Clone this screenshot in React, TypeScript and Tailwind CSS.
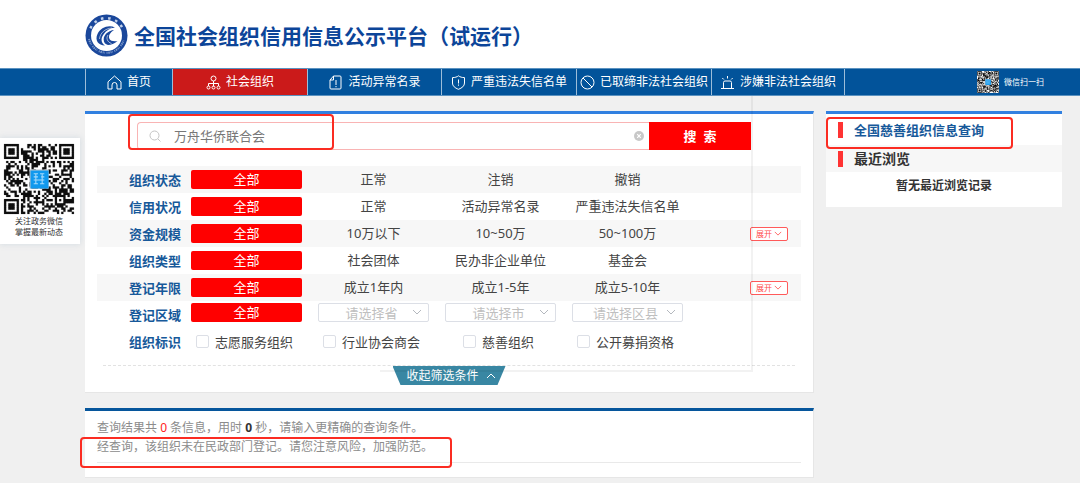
import { useState } from 'react';
import type { ReactNode } from 'react';

const QR_SIZE = 33;

const inFinder = (x: number, y: number) =>
  (x < 8 && y < 8) || (x > QR_SIZE - 9 && y < 8) || (x < 8 && y > QR_SIZE - 9);

const ring = (x: number, y: number, cx: number, cy: number) =>
  Math.max(Math.abs(x - cx), Math.abs(y - cy));

const isDark = (x: number, y: number) => {
  if (inFinder(x, y)) {
    const cx = x < 8 ? 3 : QR_SIZE - 4;
    const cy = y < 8 ? 3 : QR_SIZE - 4;
    const d = ring(x, y, cx, cy);
    return d <= 1 || d === 3;
  }
  const a = ring(x, y, 26, 26);
  if (a <= 2) return a !== 1;
  let h = (x * 374761393 + y * 668265263) | 0;
  h = Math.imul(h ^ (h >>> 13), 1274126177);
  return ((h ^ (h >>> 16)) & 1) === 1;
};

let qrPath = '';
for (let y = 0; y < QR_SIZE; y++) {
  for (let x = 0; x < QR_SIZE; x++) {
    if (isDark(x, y)) qrPath += `M${x} ${y}h1v1h-1z`;
  }
}

const QrCode = ({ className }: { className: string }) => (
  <svg className={className} viewBox="-0.5 -0.5 34 34" role="img" aria-label="微信二维码">
    <rect x="-0.5" y="-0.5" width="34" height="34" fill="#fff" />
    <path d={qrPath} fill="#111" stroke="#111" strokeWidth=".08" />
    <rect x="12" y="12" width="9" height="9" fill="#b9c4cc" />
    <rect x="12.5" y="12.5" width="8.5" height="8.5" fill="#1199ee" />
    <path d="M14 14h2M17 14h2M14 15.5h2M17.5 15.5h1.5M14 17h5M14 18.7h2M17 18.7h2M15 14v5M18 14v5" stroke="#a5dafb" strokeWidth=".5" />
  </svg>
);

const Logo = () => (
  <svg className="w-[43px] h-[43px] shrink-0" viewBox="0 0 86 86" fill="none" aria-hidden="true">
    <circle cx="43" cy="43" r="42" fill="#1a479b" />
    <circle cx="43" cy="43" r="31" fill="#fff" />
    <path d="M10.8 28.700 A35.500 35.500 0 0 1 75.200 28.700" stroke="#c3d2ea" strokeWidth="5" strokeDasharray="5 9.500" />
    <path d="M8 50 A36 36 0 0 0 78 50" stroke="#7d9acb" strokeWidth="4" strokeDasharray="2 1.500 3 1.500 2 1.500 1 3.500" />
    <path d="M60 27 C47 21 31 27 25 40 C19 53 27 63 40 63 C32 58 31 49 37 41 C42 33 50 28 60 27z" fill="#1a479b" />
    <path d="M58 32 C47 33 38 41 37 50 C37 57 41 61 46 62 C52 62 59 59 65 54 C57 55 51 54 49 50 C46 44 50 37 58 32z" fill="#1a479b" />
    <path d="M54 28 C40 29 30 38 29 50 M57 30 C43 33 35 42 36 56 M46 42 C42 48 44 56 53 59" stroke="#fff" strokeWidth="1.200" />
  </svg>
);

const NavIcon = ({ children }: { children: ReactNode }) => (
  <svg
    className="w-[15px] h-[15px] shrink-0"
    viewBox="0 0 15 15"
    fill="none"
    stroke="currentColor"
    strokeWidth="1"
    strokeLinejoin="round"
    aria-hidden="true"
  >
    {children}
  </svg>
);

const Chevron = ({ className, up }: { className: string; up?: boolean }) => (
  <svg className={className} viewBox="0 0 10 6" fill="none" stroke="currentColor" aria-hidden="true">
    <path d={up ? 'M1 5l4-4 4 4' : 'M1 1l4 4 4-4'} />
  </svg>
);

const navItems = [
  {
    label: '首页',
    width: 'w-[87px]',
    icon: <path d="M1 6.8L7.5 1 14 6.8V14h-4V10a2.5 2.5 0 0 0-5 0v4H1z" />,
  },
  {
    label: '社会组织',
    width: 'w-[135px]',
    icon: (
      <>
        <circle cx="7.5" cy="3.5" r="2.5" />
        <path d="M7.5 6v5.5M2.5 11V8.5h10V11" />
        <circle cx="2.5" cy="12.5" r="1.5" />
        <circle cx="7.5" cy="12.5" r="1.5" />
        <circle cx="12.5" cy="12.5" r="1.5" />
      </>
    ),
  },
  {
    label: '活动异常名录',
    width: 'w-[134px]',
    icon: (
      <>
        <path d="M5.5 1H12a1 1 0 0 1 1 1v11a1 1 0 0 1-1 1H3a1 1 0 0 1-1-1V5zM5.5 1v4H2" />
        <path d="M8 5v5M8 11v1.2" />
      </>
    ),
  },
  {
    label: '严重违法失信名单',
    width: 'w-[135px]',
    icon: (
      <>
        <path d="M7.5 .8C9 2 11 2.6 13.5 2.6V8c0 3-2.5 5-6 6.3C4 13 1.5 11 1.5 8V2.6C4 2.6 6 2 7.5 .8z" />
        <path d="M7.5 4.5v4M7.5 9.5v1.2" />
      </>
    ),
  },
  {
    label: '已取缔非法社会组织',
    width: 'w-[135px]',
    icon: (
      <>
        <circle cx="7.5" cy="7.5" r="6.5" />
        <path d="M3 3l9 9" />
      </>
    ),
  },
  {
    label: '涉嫌非法社会组织',
    width: 'w-[133px]',
    icon: (
      <>
        <path d="M3.5 13V7.5a1.5 1.5 0 0 1 1.5-1.5h5a1.5 1.5 0 0 1 1.5 1.5V13M1 13.500h13" />
        <path d="M7.5 1v2.5M2.3 3l1.5 1.5M12.7 3l-1.5 1.5" />
      </>
    ),
  },
];

const filterRows = [
  { label: '组织状态', options: ['正常', '注销', '撤销'] },
  { label: '信用状况', options: ['正常', '活动异常名录', '严重违法失信名单'] },
  { label: '资金规模', options: ['10万以下', '10~50万', '50~100万'], expandable: true },
  { label: '组织类型', options: ['社会团体', '民办非企业单位', '基金会'] },
  { label: '登记年限', options: ['成立1年内', '成立1-5年', '成立5-10年'], expandable: true },
];

const regions = ['请选择省', '请选择市', '请选择区县'];
const marks = ['志愿服务组织', '行业协会商会', '慈善组织', '公开募捐资格'];

const FilterRow = ({ label, striped, children }: { label: string; striped?: boolean; children: ReactNode }) => (
  <div className={`flex items-center h-[27px] pl-8 ${striped ? 'bg-[#f7f7f7]' : ''}`}>
    <span className="w-[52px] mr-[10px] shrink-0 whitespace-nowrap font-bold text-[#17599a]">{label}</span>
    {children}
  </div>
);

const AllButton = () => (
  <button type="button" className="w-[111px] h-[19px] shrink-0 rounded-xs bg-[#ff0000] text-white leading-[19px]">
    全部
  </button>
);

const Highlight = ({ className }: { className: string }) => (
  <div className={`absolute border-2 border-[#fb2c22] rounded-sm pointer-events-none ${className}`} />
);

const SearchPanel = () => {
  const [keyword, setKeyword] = useState('万舟华侨联合会');

  return (
    <section className="relative bg-white border-t-3 border-t-[#3180e0] border-r border-b border-[#e6e6e6] pb-[7px]">
      <form className="flex h-9 pt-2 pl-[52px] pr-[62px]" onSubmit={(e) => e.preventDefault()}>
        <div className="flex flex-1 items-center min-w-0 border border-r-0 border-[#f9b4b4] rounded-l-sm pl-[11px] pr-[5px]">
          <svg className="w-3 h-3 shrink-0 text-[#c4c4c4]" viewBox="0 0 12 12" fill="none" stroke="currentColor" aria-hidden="true">
            <circle cx="5.5" cy="5.5" r="4.5" />
            <path d="M9 9l2.5 2.5" />
          </svg>
          <input
            type="text"
            aria-label="搜索关键词"
            value={keyword}
            onChange={(e) => setKeyword(e.target.value)}
            className="flex-1 min-w-0 ml-[13px] text-[#777] outline-none"
          />
          <button type="button" aria-label="清除" onClick={() => setKeyword('')}>
            <svg className="w-[10px] h-[10px]" viewBox="0 0 10 10" aria-hidden="true">
              <circle cx="5" cy="5" r="5" fill="#c8c8c8" />
              <path d="M3.2 3.2l3.6 3.6M6.8 3.2L3.2 6.8" stroke="#fff" strokeWidth="1.2" />
            </svg>
          </button>
        </div>
        <button type="submit" className="w-[102px] shrink-0 bg-[#ff0000] text-white font-bold whitespace-pre">
          搜{'  '}索
        </button>
      </form>

      <div className="mt-4 mx-3 text-[#444]">
        {filterRows.map((row, index) => (
          <FilterRow key={row.label} label={row.label} striped={index % 2 === 0}>
            <div className="flex gap-4">
              <AllButton />
              {row.options.map((option) => (
                <button key={option} type="button" className="w-[111px] whitespace-nowrap leading-[19px]">
                  {option}
                </button>
              ))}
            </div>
            {row.expandable && (
              <button
                type="button"
                className="flex items-center justify-center gap-[2px] w-[38px] h-[14px] ml-auto mr-[13px] border border-[#ff5a5a] rounded-xs bg-white text-[8px] leading-3 text-[#ff4a4a]"
              >
                展开
                <Chevron className="w-2 h-[5px]" />
              </button>
            )}
          </FilterRow>
        ))}

        <FilterRow label="登记区域">
          <div className="flex gap-4 pb-1">
            <AllButton />
            {regions.map((region) => (
              <div key={region} className="relative w-[111px] h-[19px]">
                <select
                  aria-label={region}
                  className="block w-full h-full appearance-none border border-[#dcdfe6] rounded-xs bg-white pr-1 text-center leading-4 text-[#bfbfbf]"
                >
                  <option>{region}</option>
                </select>
                <Chevron className="absolute right-[7px] top-[6px] w-[10px] h-[6px] text-[#b4b8be] pointer-events-none" />
              </div>
            ))}
          </div>
        </FilterRow>

        <FilterRow label="组织标识">
          <div className="flex gap-4">
            {marks.map((mark) => (
              <label key={mark} className="flex items-center justify-center gap-[6px] w-[111px] pr-1 whitespace-nowrap">
                <input type="checkbox" className="w-[13px] h-[13px] appearance-none border border-[#dcdfe6] rounded-xs bg-white checked:bg-[#3180e0]" />
                {mark}
              </label>
            ))}
          </div>
        </FilterRow>
      </div>

      <div className="mt-[10px] mx-[18px] border-t border-dashed border-[#e2e2e2]" />
      <button
        type="button"
        className="flex items-center justify-center gap-[7px] w-[113px] h-[19px] mx-auto pl-1 bg-[#3987a3] text-xs leading-[19px] text-white [clip-path:polygon(0_0,100%_0,105px_100%,8px_100%)]"
      >
        收起筛选条件
        <Chevron up className="w-[10px] h-[6px]" />
      </button>

      <div className="absolute -top-[18px] bottom-5 right-[60px] w-[373px] border-r-2 border-b-2 border-black/5 pointer-events-none" />
      <Highlight className="left-[43px] top-0 w-[206px] h-9" />
    </section>
  );
};

const ResultPanel = () => (
  <section className="relative mt-[15px] bg-white border-t-3 border-t-[#06569c] border-r border-b border-[#e6e6e6] px-3 pt-[7px] pb-[14px] text-xs leading-[19px] text-[#8c8c8c]">
    <p>
      查询结果共 <span className="text-[#ff2222]">0</span> 条信息，用时{' '}
      <span className="font-bold text-[#333]">0</span> 秒，请输入更精确的查询条件。
    </p>
    <p>经查询，该组织未在民政部门登记。请您注意风险，加强防范。</p>
    <div className="mt-[6px] border-t border-[#e9e9e9]" />
    <Highlight className="-left-[5px] top-[26px] w-[372px] h-[31px]" />
  </section>
);

const Sidebar = () => (
  <aside className="relative w-[236px] shrink-0 bg-white border-t-3 border-[#3180e0] font-bold">
    <h2 className="flex items-center h-[31px] pl-3 text-[#17599a]">
      <span className="w-[5px] h-4 mr-[11px] bg-[#ff3333]" />
      <a href="#charity">全国慈善组织信息查询</a>
    </h2>
    <h2 className="flex items-center h-[27px] pl-3 bg-[#f7f7f7] text-sm text-[#333]">
      <span className="w-[5px] h-4 mr-[11px] bg-[#ff3333]" />
      最近浏览
    </h2>
    <p className="h-[35px] pt-1 text-center text-xs leading-5 text-[#333]">暂无最近浏览记录</p>
    <Highlight className="left-0 top-[3px] w-[187px] h-8" />
  </aside>
);

const App = () => {
  return (
    <div className="relative min-h-screen bg-[#f0f0f0] font-['Noto_Sans','Noto_Sans_CJK_SC',sans-serif] text-[13px] leading-5">
      <header className="flex items-center gap-[6px] h-[68px] pt-[3px] pl-[85px] bg-white">
        <Logo />
        <h1 className="whitespace-nowrap text-[21px] leading-7 font-bold text-[#0c4599]">
          全国社会组织信用信息公示平台（试运行）
        </h1>
      </header>

      <nav className="flex h-7 pl-[85px] pr-9 border-y border-[#5b92c0] bg-[#02539a] text-xs text-white">
        {navItems.map((item) => (
          <a
            key={item.label}
            href="#nav"
            className={`flex items-center justify-center gap-[5px] shrink-0 border-l border-[#9dbdd9] whitespace-nowrap ${item.width} ${
              item.label === '社会组织' ? 'bg-[#cb1a1a]' : ''
            }`}
          >
            <NavIcon>{item.icon}</NavIcon>
            {item.label}
          </a>
        ))}
        <div className="flex flex-1 items-center justify-end gap-[5px] border-l border-[#9dbdd9] whitespace-nowrap text-[8px]">
          <QrCode className="w-[22px] h-[22px]" />
          微信扫一扫
        </div>
      </nav>

      <div className="flex items-start gap-3 pt-[15px] pl-[85px] pr-[18px]">
        <main className="flex-1 min-w-0">
          <SearchPanel />
          <ResultPanel />
        </main>
        <Sidebar />
      </div>

      {/* floating WeChat card */}
      <div className="absolute left-0 top-[138px] w-20 h-[106px] pt-[5px] pl-[3px] bg-white shadow-[0_0_6px_rgba(140,165,190,0.3)] text-[8px] leading-[11px] text-[#333]">
        <QrCode className="w-[72px] h-[72px]" />
        <p className="w-[72px] text-center">关注政务微信</p>
        <p className="w-[72px] text-center">掌握最新动态</p>
      </div>
    </div>
  );
};

export default App;
